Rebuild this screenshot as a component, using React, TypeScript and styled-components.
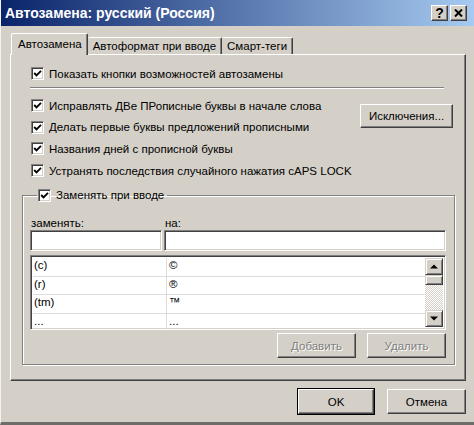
import styled, { createGlobalStyle } from 'styled-components';

const GlobalStyle = createGlobalStyle`
  html, body {
    margin: 0;
    padding: 0;
    background: #d4d0c8;
  }
  body {
    font-family: "Liberation Sans", Arial, sans-serif;
    font-size: 11.5px;
    color: #000;
  }
  * {
    box-sizing: border-box;
  }
`;

const Window = styled.div`
  width: 474px;
  height: 425px;
  background: #d4d0c8;
  border-left: 1px solid #f4f3f0;
  border-bottom: 3px solid #6f6d69;
  display: flex;
  flex-direction: column;
`;

const TitleBar = styled.div`
  height: 26px;
  flex: none;
  display: flex;
  align-items: center;
  justify-content: space-between;
  padding: 0 7px 0 4px;
  background: linear-gradient(to right, #0a246a, #a6caf0);
  color: #fff;
  font-weight: bold;
  font-size: 14px;
`;

const CaptionButtons = styled.div`
  display: flex;
  gap: 2px;
`;

const CaptionButton = styled.div`
  width: 17px;
  height: 16px;
  background: #d4d0c8;
  border: 1px solid;
  border-color: #fff #404040 #404040 #fff;
  box-shadow: inset -1px -1px 0 #808080;
  display: flex;
  align-items: center;
  justify-content: center;
  color: #000;
  font-weight: bold;
  font-size: 14px;
  line-height: 1;
`;

const Body = styled.div`
  flex: 1;
  display: flex;
  flex-direction: column;
  padding: 7px 8px 0 9px;
`;

const TabStrip = styled.div`
  height: 21px;
  display: flex;
  align-items: flex-end;
  padding-left: 1px;
  position: relative;
  z-index: 1;
`;

const Tab = styled.div<{ $active?: boolean }>`
  height: ${(p) => (p.$active ? 22 : 17)}px;
  margin-bottom: ${(p) => (p.$active ? -1 : 0)}px;
  padding: 0 5px 0 ${(p) => (p.$active ? 6 : 5)}px;
  padding-bottom: ${(p) => (p.$active ? 2 : 0)}px;
  display: flex;
  align-items: center;
  background: #d4d0c8;
  border-top: 1px solid #fff;
  border-left: ${(p) => (p.$active ? '1px solid #fff' : '0')};
  border-right: 1px solid #404040;
  box-shadow: inset -1px 0 0 #808080;
  border-radius: 2px 2px 0 0;
  white-space: nowrap;
`;

const Panel = styled.div`
  height: 327px;
  border: 1px solid;
  border-color: #fff #404040 #404040 #fff;
  box-shadow: inset -1px -1px 0 #808080;
  padding: 8px 12px 0 20px;
  display: flex;
  flex-direction: column;
`;

const CheckRow = styled.label`
  height: 21.7px;
  display: flex;
  align-items: center;
  gap: 5px;
  white-space: nowrap;
`;

const Box = styled.span`
  width: 13px;
  height: 13px;
  flex: none;
  background: #fff;
  border: 1px solid;
  border-color: #808080 #fff #fff #808080;
  box-shadow: inset 1px 1px 0 #404040, inset -1px -1px 0 #d4d0c8;
  display: flex;
  align-items: center;
  justify-content: center;
`;

const Separator = styled.div`
  height: 2px;
  flex: none;
  margin: 2px 9px 6px -1px;
  border-top: 1px solid #808080;
  border-bottom: 1px solid #fff;
`;

const OptionsGrid = styled.div`
  display: flex;
  justify-content: space-between;
  align-items: flex-start;
`;

const OptionList = styled.div`
  display: flex;
  flex-direction: column;
`;

const Button = styled.button<{ $w: number; $default?: boolean }>`
  width: ${(p) => p.$w}px;
  height: 25px;
  flex: none;
  padding: 0;
  font: inherit;
  color: ${(p) => (p.disabled ? '#808080' : '#000')};
  text-shadow: ${(p) => (p.disabled ? '1px 1px 0 #fff' : 'none')};
  background: #d4d0c8;
  border: 1px solid;
  border-color: #fff #404040 #404040 #fff;
  box-shadow: ${(p) =>
    p.$default ? 'inset -1px -1px 0 #808080, 0 0 0 1px #000' : 'inset -1px -1px 0 #808080'};
`;

const SideButton = styled(Button)`
  height: 24px;
  margin-top: 9px;
`;

const Group = styled.fieldset`
  margin: 3px 0 0 -9px;
  padding: 6px 8px 6px 7px;
  width: 433px;
  min-width: 0;
  border: 1px solid #808080;
  box-shadow: inset 1px 1px 0 #fff, 1px 1px 0 #fff;
`;

const Legend = styled.legend`
  padding: 0 3px 0 1px;
  margin-left: 7px;
`;

const FieldLabels = styled.div`
  display: grid;
  grid-template-columns: 132px 1fr;
  gap: 2px;
  height: 17px;
  padding: 4px 0 0 1px;
  align-items: center;
`;

const Inputs = styled.div`
  display: grid;
  grid-template-columns: 132px 1fr;
  gap: 2px;
  margin-top: 1px;
`;

const Field = styled.div`
  height: 21px;
  background: #fff;
  border: 1px solid;
  border-color: #808080 #fff #fff #808080;
  box-shadow: inset 1px 1px 0 #404040, inset -1px -1px 0 #d4d0c8;
`;

const List = styled.div`
  margin-top: 4px;
  height: 75px;
  overflow: hidden;
  background: #fff;
  border: 1px solid;
  border-color: #808080 #fff #fff #808080;
  box-shadow: inset 1px 1px 0 #404040, inset -1px -1px 0 #d4d0c8;
  padding: 1px 2px 2px 2px;
  display: flex;
`;

const Rows = styled.div`
  flex: 1;
  display: flex;
  flex-direction: column;
  padding-top: 1px;
`;

const Row = styled.div`
  height: 18.5px;
  flex: none;
  display: grid;
  grid-template-columns: 134px 1fr;
  border-bottom: 1px solid #dcdcdc;
  &:last-child {
    border-bottom: 0;
  }
`;

const Cell = styled.div<{ $first?: boolean }>`
  display: flex;
  align-items: center;
  padding: 0 0 3px ${(p) => (p.$first ? 1 : 2)}px;
  border-right: ${(p) => (p.$first ? '1px solid #dcdcdc' : '0')};
`;

const ScrollBar = styled.div`
  width: 18px;
  margin-top: 1px;
  display: flex;
  flex-direction: column;
  background: repeating-conic-gradient(#fff 0% 25%, #d4d0c8 0% 50%) 0 0 / 2px 2px;
`;

const ScrollButton = styled.div<{ $h: number }>`
  height: ${(p) => p.$h}px;
  flex: none;
  background: #d4d0c8;
  border: 1px solid;
  border-color: #d4d0c8 #404040 #404040 #d4d0c8;
  box-shadow: inset 1px 1px 0 #fff, inset -1px -1px 0 #808080;
  display: flex;
  align-items: center;
  justify-content: center;
`;

const Track = styled.div`
  flex: 1;
`;

const GroupButtons = styled.div`
  display: flex;
  justify-content: flex-end;
  gap: 11px;
  margin-top: 3px;
`;

const Footer = styled.div`
  display: flex;
  justify-content: flex-end;
  gap: 13px;
  padding-top: 8px;
`;

const Check = () => (
  <svg width="9" height="9" viewBox="0 0 9 9">
    <polyline points="1.2,4 3.5,6.4 8,1.8" fill="none" stroke="#000" strokeWidth="1.9" />
  </svg>
);

const Arrow = ({ up }: { up?: boolean }) => (
  <svg width="8" height="5" viewBox="0 0 8 5">
    <polygon points={up ? '0,4.5 8,4.5 4,0.5' : '0,0.5 8,0.5 4,4.5'} fill="#000" />
  </svg>
);

const CloseGlyph = () => (
  <svg width="9" height="8" viewBox="0 0 9 8">
    <path d="M1 0.5 L8 7.5 M8 0.5 L1 7.5" stroke="#000" strokeWidth="2" />
  </svg>
);

const CheckOption = ({ text }: { text: string }) => (
  <CheckRow>
    <Box>
      <Check />
    </Box>
    {text}
  </CheckRow>
);

const entries = [
  ['(c)', '©'],
  ['(r)', '®'],
  ['(tm)', '™'],
  ['...', '...'],
];

export default function App() {
  return (
    <>
      <GlobalStyle />
      <Window>
        <TitleBar>
          <span>Автозамена: русский (Россия)</span>
          <CaptionButtons>
            <CaptionButton>?</CaptionButton>
            <CaptionButton>
              <CloseGlyph />
            </CaptionButton>
          </CaptionButtons>
        </TitleBar>
        <Body>
          <TabStrip>
            <Tab $active>Автозамена</Tab>
            <Tab>Автоформат при вводе</Tab>
            <Tab>Смарт-теги</Tab>
          </TabStrip>
          <Panel>
            <CheckOption text="Показать кнопки возможностей автозамены" />
            <Separator />
            <OptionsGrid>
              <OptionList>
                <CheckOption text="Исправлять ДВе ПРописные буквы в начале слова" />
                <CheckOption text="Делать первые буквы предложений прописными" />
                <CheckOption text="Названия дней с прописной буквы" />
                <CheckOption text="Устранять последствия случайного нажатия cAPS LOCK" />
              </OptionList>
              <SideButton $w={93}>Исключения...</SideButton>
            </OptionsGrid>
            <Group>
              <Legend>
                <CheckOption text="Заменять при вводе" />
              </Legend>
              <FieldLabels>
                <span>заменять:</span>
                <span>на:</span>
              </FieldLabels>
              <Inputs>
                <Field />
                <Field />
              </Inputs>
              <List>
                <Rows>
                  {entries.map(([from, to], i) => (
                    <Row key={i}>
                      <Cell $first>{from}</Cell>
                      <Cell>{to}</Cell>
                    </Row>
                  ))}
                </Rows>
                <ScrollBar>
                  <ScrollButton $h={17}>
                    <Arrow up />
                  </ScrollButton>
                  <ScrollButton $h={10} />
                  <Track />
                  <ScrollButton $h={17}>
                    <Arrow />
                  </ScrollButton>
                </ScrollBar>
              </List>
              <GroupButtons>
                <Button $w={79} disabled>
                  Добавить
                </Button>
                <Button $w={79} disabled>
                  Удалить
                </Button>
              </GroupButtons>
            </Group>
          </Panel>
          <Footer>
            <Button $w={76} $default>
              OK
            </Button>
            <Button $w={79}>Отмена</Button>
          </Footer>
        </Body>
      </Window>
    </>
  );
}
